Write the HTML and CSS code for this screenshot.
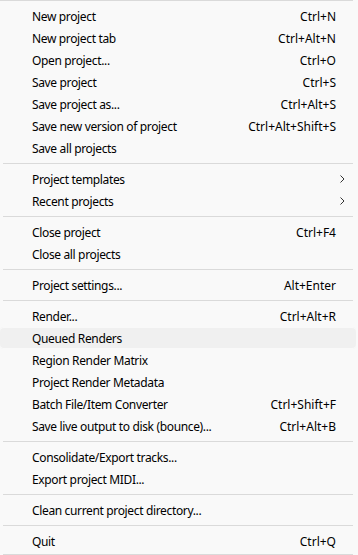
FILE: index.html
```html
<!DOCTYPE html>
<html lang="en">
<head>
  <meta charset="UTF-8">
  <meta name="viewport" content="width=device-width, initial-scale=1.0">
  <title>File menu</title>
  <link rel="stylesheet" href="styles.css">
</head>
<body>
  <div class="menu">
    <div class="sep top"></div>

    <div class="item"><span class="label">New project</span><span class="key">Ctrl+N</span></div>
    <div class="item"><span class="label">New project tab</span><span class="key">Ctrl+Alt+N</span></div>
    <div class="item"><span class="label">Open project...</span><span class="key">Ctrl+O</span></div>
    <div class="item"><span class="label">Save project</span><span class="key">Ctrl+S</span></div>
    <div class="item"><span class="label">Save project as...</span><span class="key">Ctrl+Alt+S</span></div>
    <div class="item"><span class="label">Save new version of project</span><span class="key">Ctrl+Alt+Shift+S</span></div>
    <div class="item"><span class="label">Save all projects</span></div>
    <div class="sep"></div>

    <div class="item sub"><span class="label">Project templates</span>
      <svg class="arrow" width="5" height="8" viewBox="0 0 5 8"><path d="M0.5 0.5 L4 4 L0.5 7.5" fill="none" stroke="#333" stroke-width="1"/></svg>
    </div>
    <div class="item sub"><span class="label">Recent projects</span>
      <svg class="arrow" width="5" height="8" viewBox="0 0 5 8"><path d="M0.5 0.5 L4 4 L0.5 7.5" fill="none" stroke="#333" stroke-width="1"/></svg>
    </div>
    <div class="sep"></div>

    <div class="item"><span class="label">Close project</span><span class="key">Ctrl+F4</span></div>
    <div class="item"><span class="label">Close all projects</span></div>
    <div class="sep"></div>

    <div class="item"><span class="label">Project settings...</span><span class="key">Alt+Enter</span></div>
    <div class="sep"></div>

    <div class="item"><span class="label">Render...</span><span class="key">Ctrl+Alt+R</span></div>
    <div class="item hover"><span class="label">Queued Renders</span></div>
    <div class="item"><span class="label">Region Render Matrix</span></div>
    <div class="item"><span class="label">Project Render Metadata</span></div>
    <div class="item"><span class="label">Batch File/Item Converter</span><span class="key">Ctrl+Shift+F</span></div>
    <div class="item"><span class="label">Save live output to disk (bounce)...</span><span class="key">Ctrl+Alt+B</span></div>
    <div class="sep"></div>

    <div class="item"><span class="label">Consolidate/Export tracks...</span></div>
    <div class="item"><span class="label">Export project MIDI...</span></div>
    <div class="sep"></div>

    <div class="item"><span class="label">Clean current project directory...</span></div>
    <div class="sep"></div>

    <div class="item"><span class="label">Quit</span><span class="key">Ctrl+Q</span></div>
    <div class="sep bottom"></div>
  </div>
</body>
</html>
```

FILE: styles.css
```css
body {
  margin: 0;
  background-color: #f9f9f9;
  font-family: "Noto Sans", "Open Sans", sans-serif;
  font-size: 12px;
  letter-spacing: -0.35px;
  color: #000;
}
.menu {
  width: 358px;
  height: 555px;
  overflow: hidden;
}
.item {
  height: 22px;
  display: flex;
  align-items: center;
  justify-content: space-between;
  padding: 0 20px 0 32px;
  border-radius: 4px;
  margin-right: 2px;
}
.item.hover {
  background-color: #f0f0f0;
  box-shadow: inset 0 1px 0 #f9f9f9, inset 0 -1px 0 #f9f9f9;
}
.item.sub {
  padding-right: 11px;
}
.label {
  white-space: nowrap;
}
.key {
  white-space: nowrap;
  letter-spacing: 0;
}
.arrow {
  display: block;
}
.sep {
  height: 9px;
  display: flex;
  align-items: center;
  margin: 0 5px 0 3px;
}
.sep::before {
  content: "";
  flex: 1;
  height: 1px;
  background-color: #dadada;
}
.sep.top {
  height: 5px;
  align-items: flex-start;
  margin-left: 0;
}
.sep.bottom {
  height: 3px;
  align-items: flex-end;
}
```
